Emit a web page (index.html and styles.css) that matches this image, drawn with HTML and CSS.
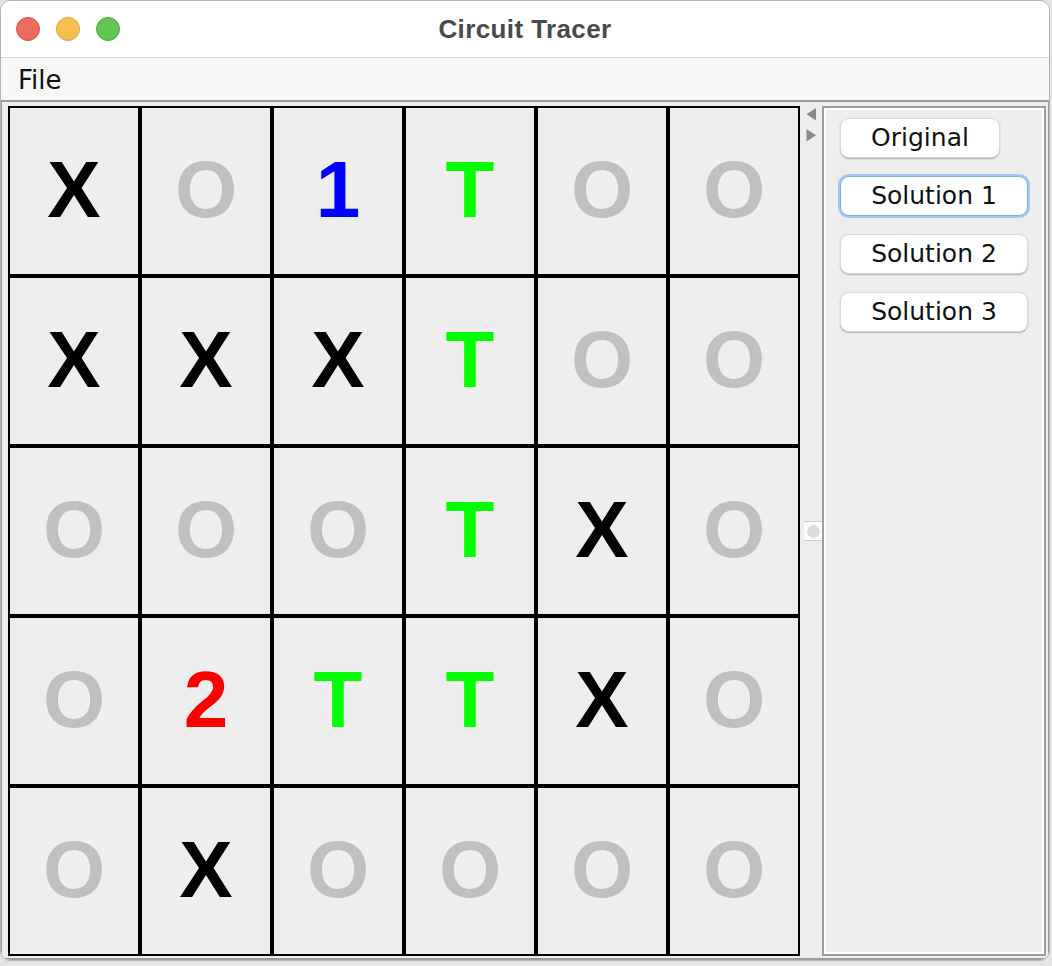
FILE: index.html
```html
<!DOCTYPE html>
<html>
<head>
<meta charset="utf-8">
<title>Circuit Tracer</title>
<link rel="stylesheet" href="styles.css">
</head>
<body>
<div class="window">
  <div class="titlebar">
    <div class="lights">
      <span class="light red"></span>
      <span class="light yellow"></span>
      <span class="light green"></span>
    </div>
    <div class="title">Circuit Tracer</div>
    <div></div>
  </div>
  <div class="menubar"><span class="menu-item">File</span></div>
  <div class="content">
    <div class="board-wrap">
      <div class="board">
        <div class="cell x">X</div><div class="cell o">O</div><div class="cell one">1</div><div class="cell t">T</div><div class="cell o">O</div><div class="cell o">O</div>
        <div class="cell x">X</div><div class="cell x">X</div><div class="cell x">X</div><div class="cell t">T</div><div class="cell o">O</div><div class="cell o">O</div>
        <div class="cell o">O</div><div class="cell o">O</div><div class="cell o">O</div><div class="cell t">T</div><div class="cell x">X</div><div class="cell o">O</div>
        <div class="cell o">O</div><div class="cell two">2</div><div class="cell t">T</div><div class="cell t">T</div><div class="cell x">X</div><div class="cell o">O</div>
        <div class="cell o">O</div><div class="cell x">X</div><div class="cell o">O</div><div class="cell o">O</div><div class="cell o">O</div><div class="cell o">O</div>
      </div>
    </div>
    <div class="divider">
      <div class="arrows">
        <svg width="12" height="13" viewBox="0 0 12 13"><polygon points="11,0 11,12.5 1.5,6.25" fill="#8a8a8a"/></svg>
        <svg width="12" height="13" viewBox="0 0 12 13"><polygon points="1.5,0 1.5,12.5 11,6.25" fill="#8a8a8a"/></svg>
      </div>
      <div class="grip"><span class="dot"></span></div>
    </div>
    <div class="side">
      <button class="btn">Original</button>
      <button class="btn wide focused">Solution 1</button>
      <button class="btn wide">Solution 2</button>
      <button class="btn wide">Solution 3</button>
    </div>
  </div>
</div>
</body>
</html>
```
FILE: styles.css
```css
html, body {
  margin: 0;
  padding: 0;
}
body {
  background: #e4e4e4;
  width: 1052px;
  height: 966px;
  overflow: hidden;
}
.window {
  width: 1050px;
  height: 961px;
  box-sizing: border-box;
  border: 1px solid #b4b4b4;
  border-radius: 10px;
  overflow: hidden;
  background: #eeeeee;
  display: flex;
  flex-direction: column;
}
.titlebar {
  height: 57px;
  box-sizing: border-box;
  background: #ffffff;
  border-bottom: 1px solid #d6d6d6;
  display: grid;
  grid-template-columns: 1fr auto 1fr;
  align-items: center;
}
.lights {
  display: flex;
  gap: 16px;
  padding-left: 15px;
}
.light {
  width: 24px;
  height: 24px;
  border-radius: 50%;
  box-sizing: border-box;
}
.red { background: #ed6a5e; border: 1px solid #d65548; }
.yellow { background: #f5bf4f; border: 1px solid #d9a23a; }
.green { background: #61c554; border: 1px solid #4ea942; }
.title {
  font-family: "Liberation Sans", Arial, sans-serif;
  font-weight: bold;
  font-size: 26px;
  letter-spacing: 0.4px;
  color: #4a4a4a;
}
.menubar {
  height: 42px;
  background: #f7f7f7;
  display: flex;
  align-items: center;
  padding-left: 17px;
}
.menu-item {
  font-family: "DejaVu Sans", sans-serif;
  font-size: 26px;
  color: #111;
  padding-top: 2px;
}
.content {
  flex: 1;
  display: flex;
  align-items: flex-start;
  border-top: 2px solid #9c9c9c;
  border-left: 1px solid #9c9c9c;
  border-right: 1px solid #9c9c9c;
  border-bottom: 2px solid #9c9c9c;
  background: #eeeeee;
}
.board-wrap {
  padding: 4px 0 0 6px;
}
.board {
  display: grid;
  grid-template-columns: repeat(6, 132px);
  grid-template-rows: repeat(5, 170px);
}
.cell {
  box-sizing: border-box;
  border: 2px solid #000;
  background: #eeeeee;
  display: flex;
  align-items: center;
  justify-content: center;
  font-family: "Liberation Sans", Arial, sans-serif;
  font-weight: bold;
  font-size: 80px;
  padding-bottom: 3px;
}
.x { color: #000000; }
.o { color: #c0c0c0; }
.t { color: #00ff00; }
.one { color: #0000ff; }
.two { color: #ff0000; }
.divider {
  width: 22px;
  align-self: stretch;
  display: flex;
  flex-direction: column;
  align-items: flex-start;
}
.arrows {
  display: flex;
  flex-direction: column;
  gap: 8px;
  padding: 6px 0 0 5px;
}
.arrows svg {
  display: block;
}
.grip {
  margin-top: 379px;
  margin-left: 4px;
  width: 18px;
  height: 20px;
  box-sizing: border-box;
  background: #ffffff;
  border-top: 1px solid #cfcfcf;
  border-bottom: 1px solid #cfcfcf;
  display: flex;
  align-items: center;
  justify-content: center;
}
.dot {
  width: 13px;
  height: 13px;
  border-radius: 50%;
  background: #dcdcdc;
}
.side {
  width: 224px;
  height: 850px;
  margin-top: 4px;
  box-sizing: border-box;
  border: 2px solid #9c9c9c;
  box-shadow: inset 0 0 0 2px #ffffff;
  padding: 10px 0 0 16px;
  display: flex;
  flex-direction: column;
  align-items: flex-start;
  gap: 18px;
}
.btn {
  height: 40px;
  width: 160px;
  margin: 0;
  padding: 0;
  background: #ffffff;
  border: 1px solid #dadada;
  border-radius: 9px;
  box-shadow: 0 1px 1.5px rgba(0,0,0,0.28);
  font-family: "DejaVu Sans", sans-serif;
  font-size: 25px;
  color: #111;
  line-height: 38px;
}
.btn.wide {
  width: 188px;
}
.btn.focused {
  border: 1px solid #7fabea;
  box-shadow: 0 0 0 2px #a6c7f2;
}
```
